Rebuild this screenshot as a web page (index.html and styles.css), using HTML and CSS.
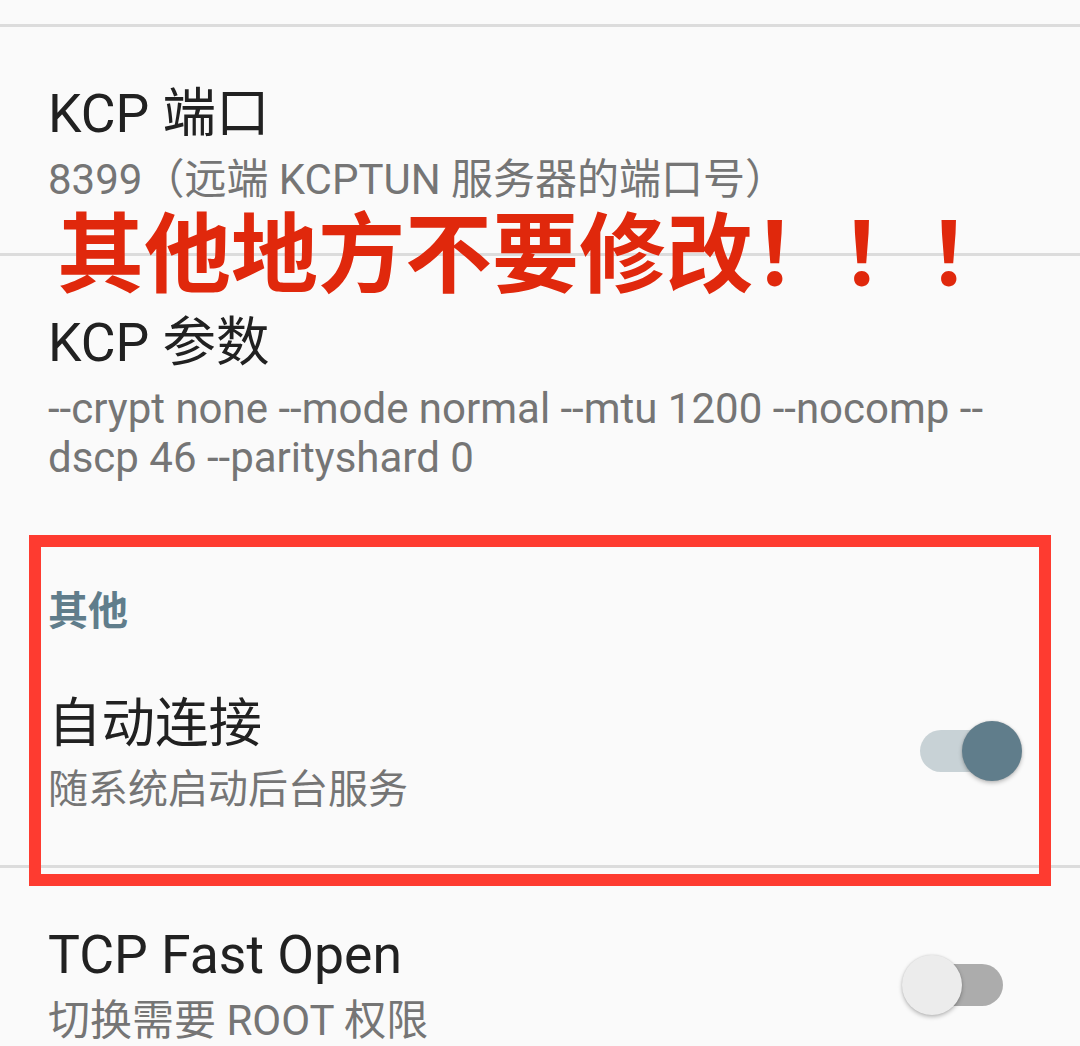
FILE: index.html
```html
<!DOCTYPE html>
<html lang="zh-CN">
<head>
<meta charset="utf-8">
<title>设置</title>
<link rel="stylesheet" href="styles.css">
</head>
<body>
<div class="screen">
  <div class="top-spacer"></div>

  <div class="pref divided">
    <div class="pref-text">
      <div class="pref-title">KCP 端口</div>
      <div class="pref-summary">8399（远端 KCPTUN 服务器的端口号）</div>
    </div>
  </div>

  <div class="pref divided">
    <div class="pref-text">
      <div class="pref-title">KCP 参数</div>
      <div class="pref-summary">--crypt none --mode normal --mtu 1200 --nocomp --dscp 46 --parityshard 0</div>
    </div>
  </div>

  <div class="category">其他</div>

  <div class="pref pref-auto">
    <div class="pref-text">
      <div class="pref-title">自动连接</div>
      <div class="pref-summary summary-cjk">随系统启动后台服务</div>
    </div>
    <div class="switch switch-on switch-raise">
      <span class="switch-track"></span>
      <span class="switch-thumb"></span>
    </div>
  </div>

  <div class="pref divided">
    <div class="pref-text">
      <div class="pref-title">TCP Fast Open</div>
      <div class="pref-summary">切换需要 ROOT 权限</div>
    </div>
    <div class="switch switch-off">
      <span class="switch-track"></span>
      <span class="switch-thumb"></span>
    </div>
  </div>

  <div class="note">其他地方不要修改！！！</div>
  <div class="highlight-box"></div>
</div>
</body>
</html>
```

FILE: styles.css
```css
html, body {
  margin: 0;
  padding: 0;
  background: #fafafa;
}

.screen {
  position: relative;
  width: 1080px;
  height: 1046px;
  overflow: hidden;
  background: #fafafa;
  font-family: Roboto, "Noto Sans CJK SC", sans-serif;
}

.top-spacer {
  height: 24px;
}

.pref {
  display: flex;
  align-items: center;
  padding: 57px 58px 49px 48px;
}

.pref.divided {
  border-top: 3px solid #dcdcdc;
}

.pref-text {
  flex: 1;
  min-width: 0;
}

.pref-title {
  font-size: 53.5px;
  line-height: 60px;
  color: #212121;
}

.pref-summary {
  margin-top: 11px;
  font-size: 42px;
  line-height: 49px;
  color: #757575;
}

.summary-cjk {
  font-size: 40px;
}

.pref-auto {
  padding-bottom: 51px;
}

.category {
  padding: 57px 48px 1px 48px;
  font-size: 40px;
  line-height: 48px;
  font-weight: 700;
  color: #607d8b;
}

.switch {
  position: relative;
  flex: none;
  width: 120px;
  height: 60px;
  margin-left: 24px;
}

.switch-raise {
  margin-bottom: 6px;
}

.switch-track {
  position: absolute;
  left: 18px;
  right: 19px;
  top: 9px;
  height: 42px;
  border-radius: 21px;
}

.switch-thumb {
  position: absolute;
  top: 0;
  width: 60px;
  height: 60px;
  border-radius: 50%;
  box-shadow: 0 2px 4px rgba(0, 0, 0, 0.25), 0 0 2px rgba(0, 0, 0, 0.12);
}

.switch-on .switch-track {
  background: #c8d2d6;
}

.switch-on .switch-thumb {
  right: 0;
  background: #607d8b;
}

.switch-off .switch-track {
  background: #acacac;
}

.switch-off .switch-thumb {
  left: 0;
  background: #ececec;
}

.note {
  position: absolute;
  left: 57px;
  top: 210px;
  font-family: "Noto Sans CJK SC", sans-serif;
  font-weight: 700;
  font-size: 87px;
  line-height: 76px;
  color: #e0280c;
  white-space: nowrap;
}

.highlight-box {
  position: absolute;
  left: 29px;
  top: 535px;
  width: 1022px;
  height: 351px;
  box-sizing: border-box;
  border: 12px solid #fe3b30;
}
```
